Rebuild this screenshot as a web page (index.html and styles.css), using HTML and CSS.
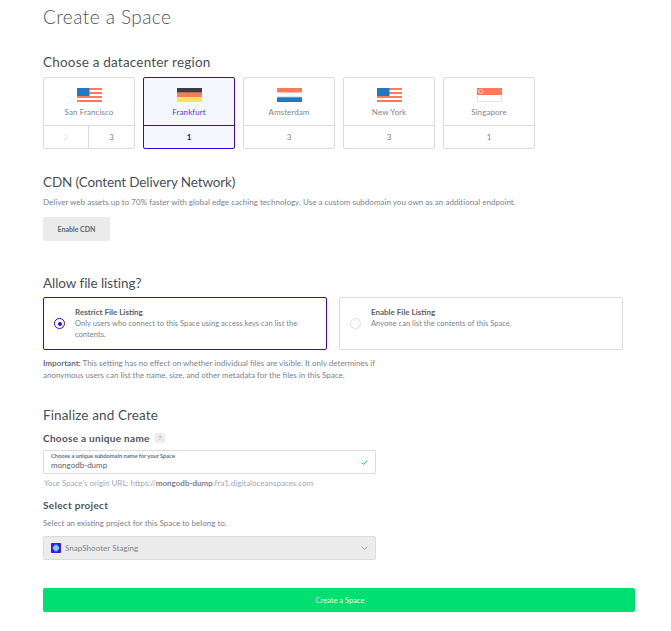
FILE: index.html
```html
<!DOCTYPE html>
<html lang="en">
<head>
<meta charset="utf-8">
<title>Create a Space</title>
<link rel="stylesheet" href="styles.css">
</head>
<body>
<main class="page">
  <h1 class="title">Create a Space</h1>

  <section class="region">
    <h2 class="heading">Choose a datacenter region</h2>
    <div class="regions">
      <div class="card">
        <div class="card-top">
          <svg class="flag" viewBox="0 0 25 14"><use href="#us"/></svg>
          <span class="city">San Francisco</span>
        </div>
        <div class="card-nums"><span class="num num-off">2</span><span class="num num-split">3</span></div>
      </div>
      <div class="card card-on">
        <div class="card-top">
          <svg class="flag" viewBox="0 0 25 14"><rect width="25" height="4.67" fill="#413c3c"/><rect y="4.67" width="25" height="4.67" fill="#ff7a59"/><rect y="9.33" width="25" height="4.67" fill="#f7e64f"/></svg>
          <span class="city">Frankfurt</span>
        </div>
        <div class="card-nums"><span class="num">1</span></div>
      </div>
      <div class="card">
        <div class="card-top">
          <svg class="flag" viewBox="0 0 25 14"><rect width="25" height="4.67" fill="#ff7a59"/><rect y="4.67" width="25" height="4.67" fill="#fff"/><rect y="8.6" width="25" height="1" fill="#a9cde6"/><rect y="9.33" width="25" height="4.67" fill="#2478bf"/></svg>
          <span class="city">Amsterdam</span>
        </div>
        <div class="card-nums"><span class="num">3</span></div>
      </div>
      <div class="card">
        <div class="card-top">
          <svg class="flag" viewBox="0 0 25 14"><use href="#us"/></svg>
          <span class="city">New York</span>
        </div>
        <div class="card-nums"><span class="num">3</span></div>
      </div>
      <div class="card">
        <div class="card-top">
          <svg class="flag" viewBox="0 0 25 14"><rect x=".5" y=".5" width="24" height="13" fill="#fff" stroke="#e6e6e6"/><rect width="25" height="7" fill="#ff7a59"/><circle cx="3.6" cy="3.5" r="2" fill="none" stroke="#ffd9cf"/></svg>
          <span class="city">Singapore</span>
        </div>
        <div class="card-nums"><span class="num">1</span></div>
      </div>
    </div>
  </section>

  <section class="cdn">
    <h2 class="heading heading-cdn">CDN (Content Delivery Network)</h2>
    <p class="text">Deliver web assets up to 70% faster with global edge caching technology. Use a custom subdomain you own as an additional endpoint.</p>
    <button class="btn-muted" type="button">Enable CDN</button>
  </section>

  <section class="listing">
    <h2 class="heading heading-listing">Allow file listing?</h2>
    <div class="options">
      <div class="option option-on">
        <span class="radio radio-on"></span>
        <div class="option-body">
          <strong class="option-title">Restrict File Listing</strong>
          <p class="option-text">Only users who connect to this Space using access keys can list the contents.</p>
        </div>
      </div>
      <div class="option">
        <span class="radio"></span>
        <div class="option-body">
          <strong class="option-title">Enable File Listing</strong>
          <p class="option-text">Anyone can list the contents of this Space.</p>
        </div>
      </div>
    </div>
    <p class="note"><strong>Important:</strong> This setting has no effect on whether individual files are visible. It only determines if anonymous users can list the name, size, and other metadata for the files in this Space.</p>
  </section>

  <section class="finalize">
    <h2 class="heading heading-final">Finalize and Create</h2>
    <div class="label-row"><h3 class="label">Choose a unique name</h3><span class="help">?</span></div>
    <div class="field">
      <div class="field-text">
        <span class="field-label">Choose a unique subdomain name for your Space</span>
        <span class="field-value">mongodb-dump</span>
      </div>
      <svg class="check" viewBox="0 0 8 6"><path d="M.7 3.2 2.8 5.2 7.4.7" fill="none" stroke="#00e071" stroke-width="1.2"/></svg>
    </div>
    <p class="origin">Your Space's origin URL: https://<b>mongodb-dump</b>.fra1.digitaloceanspaces.com</p>
    <h3 class="label label-project">Select project</h3>
    <p class="text text-project">Select an existing project for this Space to belong to.</p>
    <div class="select">
      <svg class="project-icon" viewBox="0 0 10 10"><rect width="10" height="10" rx="1" fill="#3f12f0"/><path d="M3.4 1.8h3.2v1.6h1.6v3.2H6.6v1.6H3.4V6.6H1.8V3.4h1.6z" fill="#6fd8f5"/></svg>
      <span class="select-value">SnapShooter Staging</span>
      <svg class="chevron" viewBox="0 0 8 5"><path d="M.5.7 4 4.2 7.5.7" fill="none" stroke="#8a8a8a" stroke-width="1"/></svg>
    </div>
    <button class="btn-create" type="button">Create a Space</button>
  </section>
</main>
<svg class="defs" width="0" height="0">
  <defs>
    <g id="us">
      <rect width="25" height="14" fill="#fff"/>
      <rect width="25" height="2" fill="#ff7a59"/>
      <rect y="4" width="25" height="2" fill="#ff7a59"/>
      <rect y="8" width="25" height="2" fill="#ff7a59"/>
      <rect y="12" width="25" height="2" fill="#ff7a59"/>
      <rect width="12.5" height="8" fill="#2478bf"/>
    </g>
  </defs>
</svg>
</body>
</html>
```
FILE: styles.css
```css
* { box-sizing: border-box; }
html, body { margin: 0; padding: 0; background: #fff; }
body { font-family: "Lato", "Open Sans", sans-serif; color: #676f7c; overflow: hidden; height: 631px; }
.page { width: 592px; margin-left: 43px; padding-top: 7px; }
.title { margin: 0; font-size: 19px; line-height: 20px; font-weight: 300; color: #4e535c; letter-spacing: .45px; }
.heading { margin: 0; font-size: 13.5px; line-height: 16px; font-weight: 400; color: #4a4f59; letter-spacing: .2px; }
.heading-cdn { letter-spacing: -.13px; }
.heading-listing { letter-spacing: -.06px; }
.heading-final { letter-spacing: .12px; }
.region { margin-top: 27px; }
.regions { display: flex; gap: 8px; margin-top: 7px; width: 492px; }
.card { width: 92px; height: 72px; border: 1px solid #dcdcdc; border-radius: 2px; display: flex; flex-direction: column; background: #fff; }
.card-on { border-color: #3f00e7; background: #f5f7fe; color: #3f00e7; }
.card-top { height: 48px; flex: none; display: flex; flex-direction: column; align-items: center; padding-top: 10px; border-bottom: 1px solid #dcdcdc; }
.card-on .card-top { border-bottom-color: #3f00e7; }
.flag { width: 25px; height: 14px; display: block; }
.city { font-size: 8px; line-height: 10px; margin-top: 5px; color: #808793; letter-spacing: .08px; }
.card-on .city { color: #4a3bf0; }
.card-nums { flex: 1; display: flex; }
.num { flex: 1 1 0; text-align: center; font-size: 8px; line-height: 22px; color: #7d8490; }
.card-on .num { color: #2c00c8; font-weight: 700; }
.num-off { color: #e6e6e6; flex: none; width: 44px; }
.num-split { border-left: 1px solid #dcdcdc; }
.cdn { margin-top: 25px; }
.text { margin: 6px 0 0; font-size: 8px; line-height: 12px; color: #7b828e; letter-spacing: .02px; }
.btn-muted { display: block; width: 67px; height: 24px; margin-top: 9px; border: 0; border-radius: 2px; background: #ebebeb; color: #5f6671; font: 700 7px/24px "Lato", sans-serif; padding: 0; }
.listing { margin-top: 34px; }
.options { display: flex; gap: 12px; margin-top: 6px; width: 580px; }
.option { flex: 1 1 0; height: 53px; border: 1px solid #dcdcdc; border-radius: 2px; display: flex; align-items: center; padding: 0 11px 0 10px; gap: 10px; }
.option-on { border-color: #3f00e7; }
.radio { flex: none; width: 11px; height: 11px; border-radius: 50%; border: 1px solid #dcdcdc; background: #fff; position: relative; }
.radio-on { border-color: #3f00e7; }
.radio-on::after { content: ""; position: absolute; left: 2.5px; top: 2.5px; width: 4px; height: 4px; border-radius: 50%; background: #3f00e7; }
.option-body { flex: 1; align-self: flex-start; padding-top: 8px; }
.option-title { display: block; font-size: 8px; line-height: 12px; font-weight: 700; color: #5a5f69; }
.option-text { margin: 0; font-size: 7.5px; line-height: 11px; color: #7b828e; letter-spacing: .04px; }
.note { margin: 7px 0 0; width: 335px; font-size: 8px; line-height: 12px; color: #7b828e; letter-spacing: 0; }
.note strong { color: #676f7c; }
.finalize { margin-top: 26px; }
.label-row { display: flex; align-items: center; gap: 5px; margin-top: 9px; }
.label { margin: 0; font-size: 10px; line-height: 12px; font-weight: 700; color: #4e535c; letter-spacing: .3px; }
.help { width: 10px; height: 10px; background: #eee; border-radius: 1px; font-size: 6px; line-height: 10px; text-align: center; color: #888; }
.field { width: 333px; height: 24px; margin-top: 6px; border: 1px solid #dcdcdc; border-radius: 2px; display: flex; align-items: center; padding: 0 7px; justify-content: space-between; background: #fff; }
.field-text { display: flex; flex-direction: column; }
.field-label { font-size: 5.7px; line-height: 6px; font-weight: 700; color: #676f7c; }
.field-value { font-size: 8px; line-height: 12px; color: #5a5f69; letter-spacing: 0; }
.check { width: 7px; height: 5px; display: block; }
.origin { margin: 3px 0 0 1px; font-size: 8px; line-height: 12px; color: #a3a8b0; letter-spacing: 0; }
.origin b { color: #7b828e; font-weight: 700; }
.label-project { margin-top: 10px; }
.text-project { margin-top: 6px; letter-spacing: 0; }
.select { width: 333px; height: 24px; margin-top: 7px; border: 1px solid #dcdcdc; border-radius: 2px; background: #ececec; display: flex; align-items: center; padding: 0 7px; }
.project-icon { width: 10px; height: 10px; display: block; flex: none; }
.select-value { flex: 1; margin-left: 4px; font-size: 8px; color: #7b828e; letter-spacing: .05px; }
.chevron { width: 7px; height: 4px; display: block; }
.btn-create { display: block; width: 592px; height: 24px; margin-top: 28px; border: 0; border-radius: 2px; background: #00e071; color: #e8fff3; font: 400 7.5px/22px "Lato", sans-serif; padding: 2px 0 0 2px; }
.defs { position: absolute; }
```
